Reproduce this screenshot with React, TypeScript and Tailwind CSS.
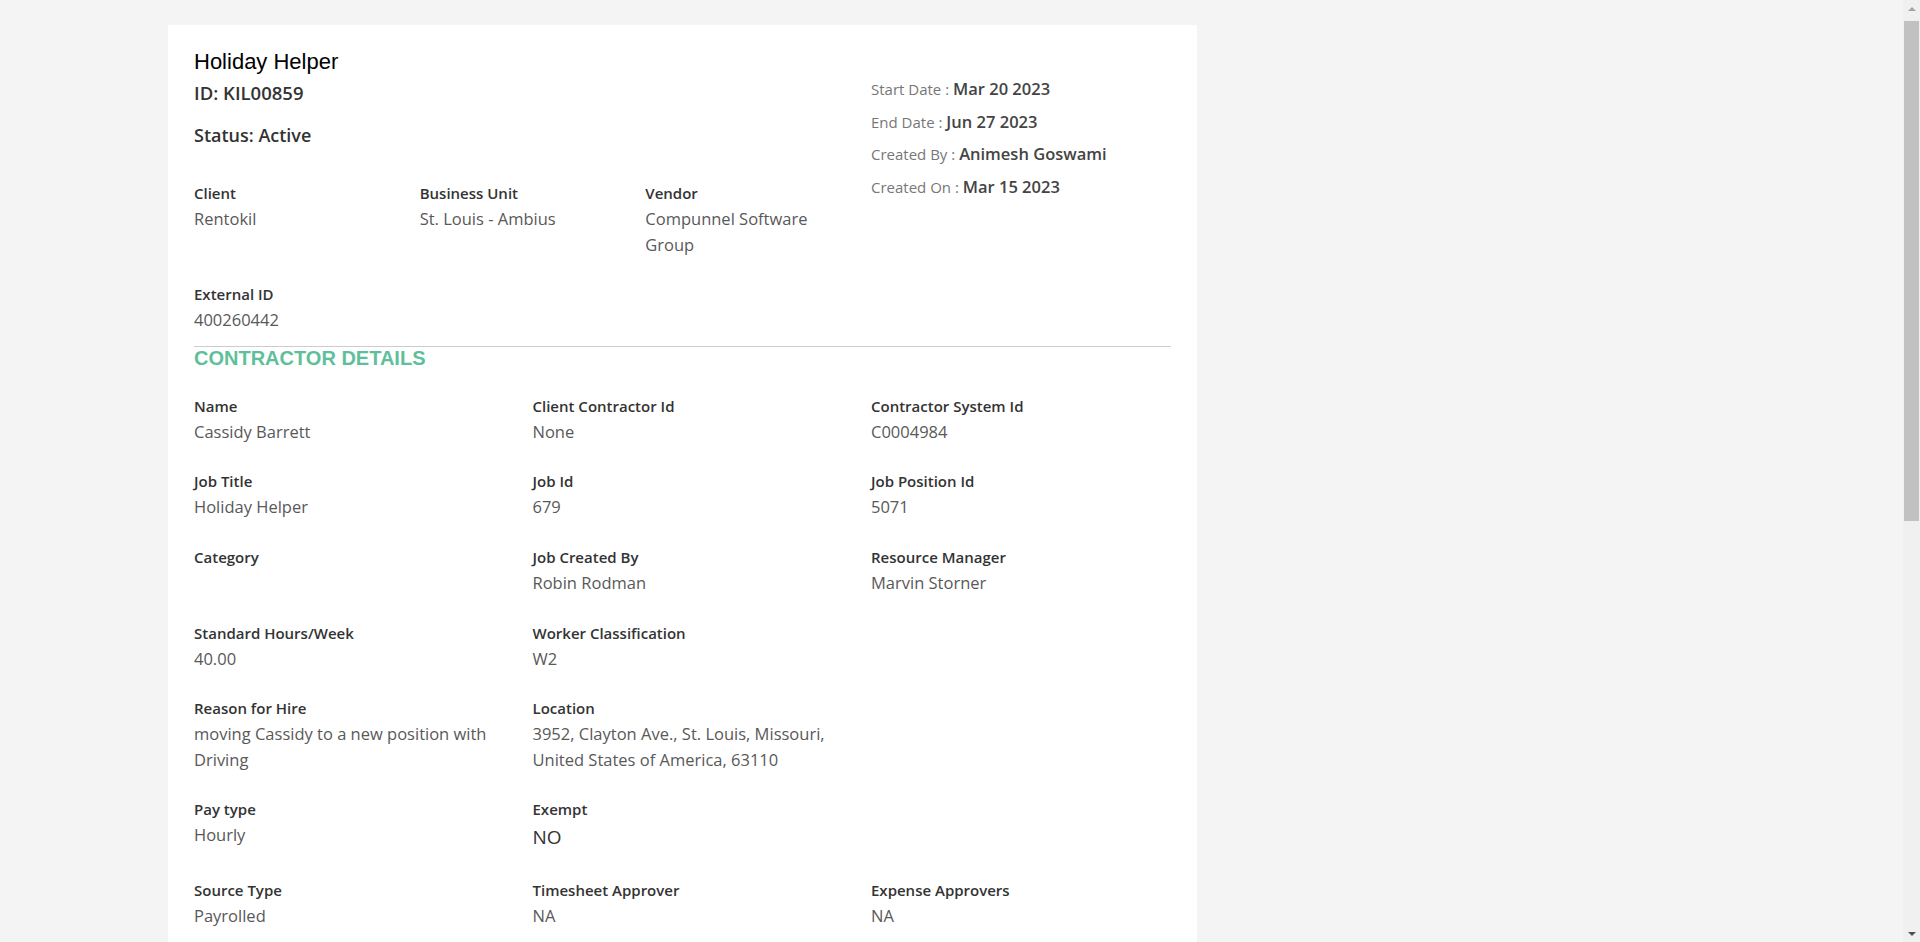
import React from 'react';

type Field = { label: string; value?: string; big?: boolean };

const topFields: Field[] = [
  { label: 'Client', value: 'Rentokil' },
  { label: 'Business Unit', value: 'St. Louis - Ambius' },
  { label: 'Vendor', value: 'Compunnel Software Group' },
  { label: 'External ID', value: '400260442' },
];

const contractorFields: (Field | null)[] = [
  { label: 'Name', value: 'Cassidy Barrett' },
  { label: 'Client Contractor Id', value: 'None' },
  { label: 'Contractor System Id', value: 'C0004984' },
  { label: 'Job Title', value: 'Holiday Helper' },
  { label: 'Job Id', value: '679' },
  { label: 'Job Position Id', value: '5071' },
  { label: 'Category' },
  { label: 'Job Created By', value: 'Robin Rodman' },
  { label: 'Resource Manager', value: 'Marvin Storner' },
  { label: 'Standard Hours/Week', value: '40.00' },
  { label: 'Worker Classification', value: 'W2' },
  null,
  { label: 'Reason for Hire', value: 'moving Cassidy to a new position with Driving' },
  { label: 'Location', value: '3952, Clayton Ave., St. Louis, Missouri, United States of America, 63110' },
  null,
  { label: 'Pay type', value: 'Hourly' },
  { label: 'Exempt', value: 'NO', big: true },
  null,
  { label: 'Source Type', value: 'Payrolled' },
  { label: 'Timesheet Approver', value: 'NA' },
  { label: 'Expense Approvers', value: 'NA' },
];

const dates = [
  { label: 'Start Date', value: 'Mar 20 2023' },
  { label: 'End Date', value: 'Jun 27 2023' },
  { label: 'Created By', value: 'Animesh Goswami' },
  { label: 'Created On', value: 'Mar 15 2023' },
];

const DetailField: React.FC<{ field: Field; className?: string }> = ({ field, className = '' }) => (
  <div className={`pr-[30px] ${className}`}>
    <div className="text-[15px] leading-[25px] font-semibold text-[#333]">{field.label}</div>
    {field.big ? (
      <div className="text-[19px] leading-[31px] text-[#333]">{field.value}</div>
    ) : (
      <div className="text-[16.5px] leading-[25.6px] min-h-[25.6px] text-[#595959]">{field.value}</div>
    )}
  </div>
);

// fake window scrollbar on the right edge
const ScrollBar: React.FC = () => (
  <div className="fixed top-0 right-0 h-screen w-[17px] bg-[#f0f0f0] flex flex-col items-center">
    <div className="h-[17px] flex items-center justify-center">
      <div className="w-0 h-0 border-l-[4px] border-r-[4px] border-b-[4px] border-l-transparent border-r-transparent border-b-[#a3a3a3]" />
    </div>
    <div className="mt-[4px] h-[500px] w-[15px] bg-[#c1c1c1]" />
    <div className="mt-auto h-[17px] flex items-center justify-center">
      <div className="w-0 h-0 border-l-[4px] border-r-[4px] border-t-[4px] border-l-transparent border-r-transparent border-t-[#505050]" />
    </div>
  </div>
);

const App: React.FC = () => {
  return (
    <div className="min-h-screen bg-[#f4f4f4] pt-[25px] pl-[168px] pb-[40px] font-['Open_Sans',sans-serif]">
      <div className="w-[1029px] bg-white px-[26px] pt-[24px] pb-[60px]">
        {/* Header */}
        <div className="flex">
          <div className="w-[677px]">
            <h1 className="font-['Liberation_Sans',Arial,sans-serif] text-[22px] leading-[26px] text-black">
              Holiday Helper
            </h1>
            <h2 className="mt-[4px] text-[18.5px] leading-[28px] font-semibold text-[#333]">ID: KIL00859</h2>
            <h3 className="mt-[15px] text-[18px] leading-[27px] font-semibold text-[#333]">Status: Active</h3>

            <div className="grid grid-cols-3 mt-[32px]">
              {topFields.slice(0, 3).map((f) => (
                <DetailField key={f.label} field={f} className="mb-[25px]" />
              ))}
            </div>
            <DetailField field={topFields[3]} />
          </div>

          <div className="flex-1 mt-[24px]">
            {dates.map((d) => (
              <div key={d.label} className="leading-[32.6px] whitespace-nowrap">
                <span className="text-[15px] text-[#777]">{d.label} : </span>
                <span className="text-[16.5px] font-semibold text-[#444]">{d.value}</span>
              </div>
            ))}
          </div>
        </div>

        <hr className="mt-[13px] border-0 border-t border-[#cccccc]" />
        <h4 className="font-['Liberation_Sans',Arial,sans-serif] text-[20px] leading-[22px] font-bold text-[#5fbf9a]">
          CONTRACTOR DETAILS
        </h4>

        {/* Contractor grid */}
        <div className="grid grid-cols-[338.5px_338.5px_1fr] mt-[25px]">
          {contractorFields.map((f, i) =>
            f ? <DetailField key={i} field={f} className="mb-[25px]" /> : <div key={i} />
          )}
        </div>
      </div>
      <ScrollBar />
    </div>
  );
};

export default App;
